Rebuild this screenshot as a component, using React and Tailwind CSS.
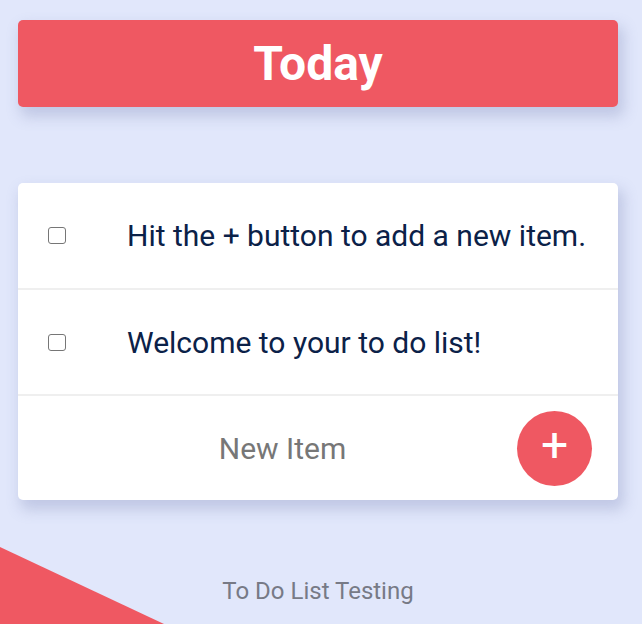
import { useState } from 'react'

const ITEMS = [
  'Hit the + button to add a new item.',
  'Welcome to your to do list!',
]

function TodoRow({ text, first }) {
  const [done, setDone] = useState(false)
  return (
    <div className={`flex items-center border-b-2 border-[#efefef] ${first ? 'h-[107px]' : 'h-[106px]'}`}>
      <div className="w-[109px] pl-[30px] flex items-center">
        <input
          type="checkbox"
          checked={done}
          onChange={() => setDone(!done)}
          className="appearance-none w-[18px] h-[17px] rounded-[3px] border-[1.5px] border-[#767676] bg-white"
        />
      </div>
      <p className="text-[30px] text-[#0b2148]">{text}</p>
    </div>
  )
}

export default function App() {
  return (
    <div className="relative min-h-[624px] overflow-hidden bg-[#e1e7fb] font-['Roboto',sans-serif] pt-5">
      {/* corner decoration */}
      <div className="absolute left-0 bottom-0 w-[164px] h-[77px] bg-[#ef5862] [clip-path:polygon(0_0,100%_100%,0_100%)]" />

      <div className="relative ml-[18px] w-[600px]">
        {/* ── Heading ── */}
        <div className="h-[87px] flex items-center justify-center rounded-[5px] bg-[#ef5862] shadow-[4px_8px_14px_2px_rgba(120,130,180,0.3)]">
          <h1 className="text-[48px] font-bold text-white leading-none">Today</h1>
        </div>

        {/* ── List card ── */}
        <div className="mt-[76px] rounded-[5px] bg-white shadow-[4px_8px_14px_2px_rgba(120,130,180,0.3)]">
          {ITEMS.map((item, i) => <TodoRow key={item} text={item} first={i === 0} />)}

          <form className="flex items-center h-[104px] pl-[30px] pr-[26px]" onSubmit={e => e.preventDefault()}>
            <input
              type="text"
              placeholder="New Item"
              className="flex-1 min-w-0 text-center text-[30px] text-[#0b2148] placeholder:text-[#777777] outline-none bg-transparent"
            />
            <button
              type="submit"
              className="w-[75px] h-[75px] flex-shrink-0 rounded-full bg-[#ef5862] text-white text-[48px] leading-none flex items-center justify-center pb-[6px]"
            >
              +
            </button>
          </form>
        </div>

        {/* ── Footer ── */}
        <footer className="mt-[73px] text-center text-[24px] text-[#777a86]">
          To Do List Testing
        </footer>
      </div>
    </div>
  )
}
